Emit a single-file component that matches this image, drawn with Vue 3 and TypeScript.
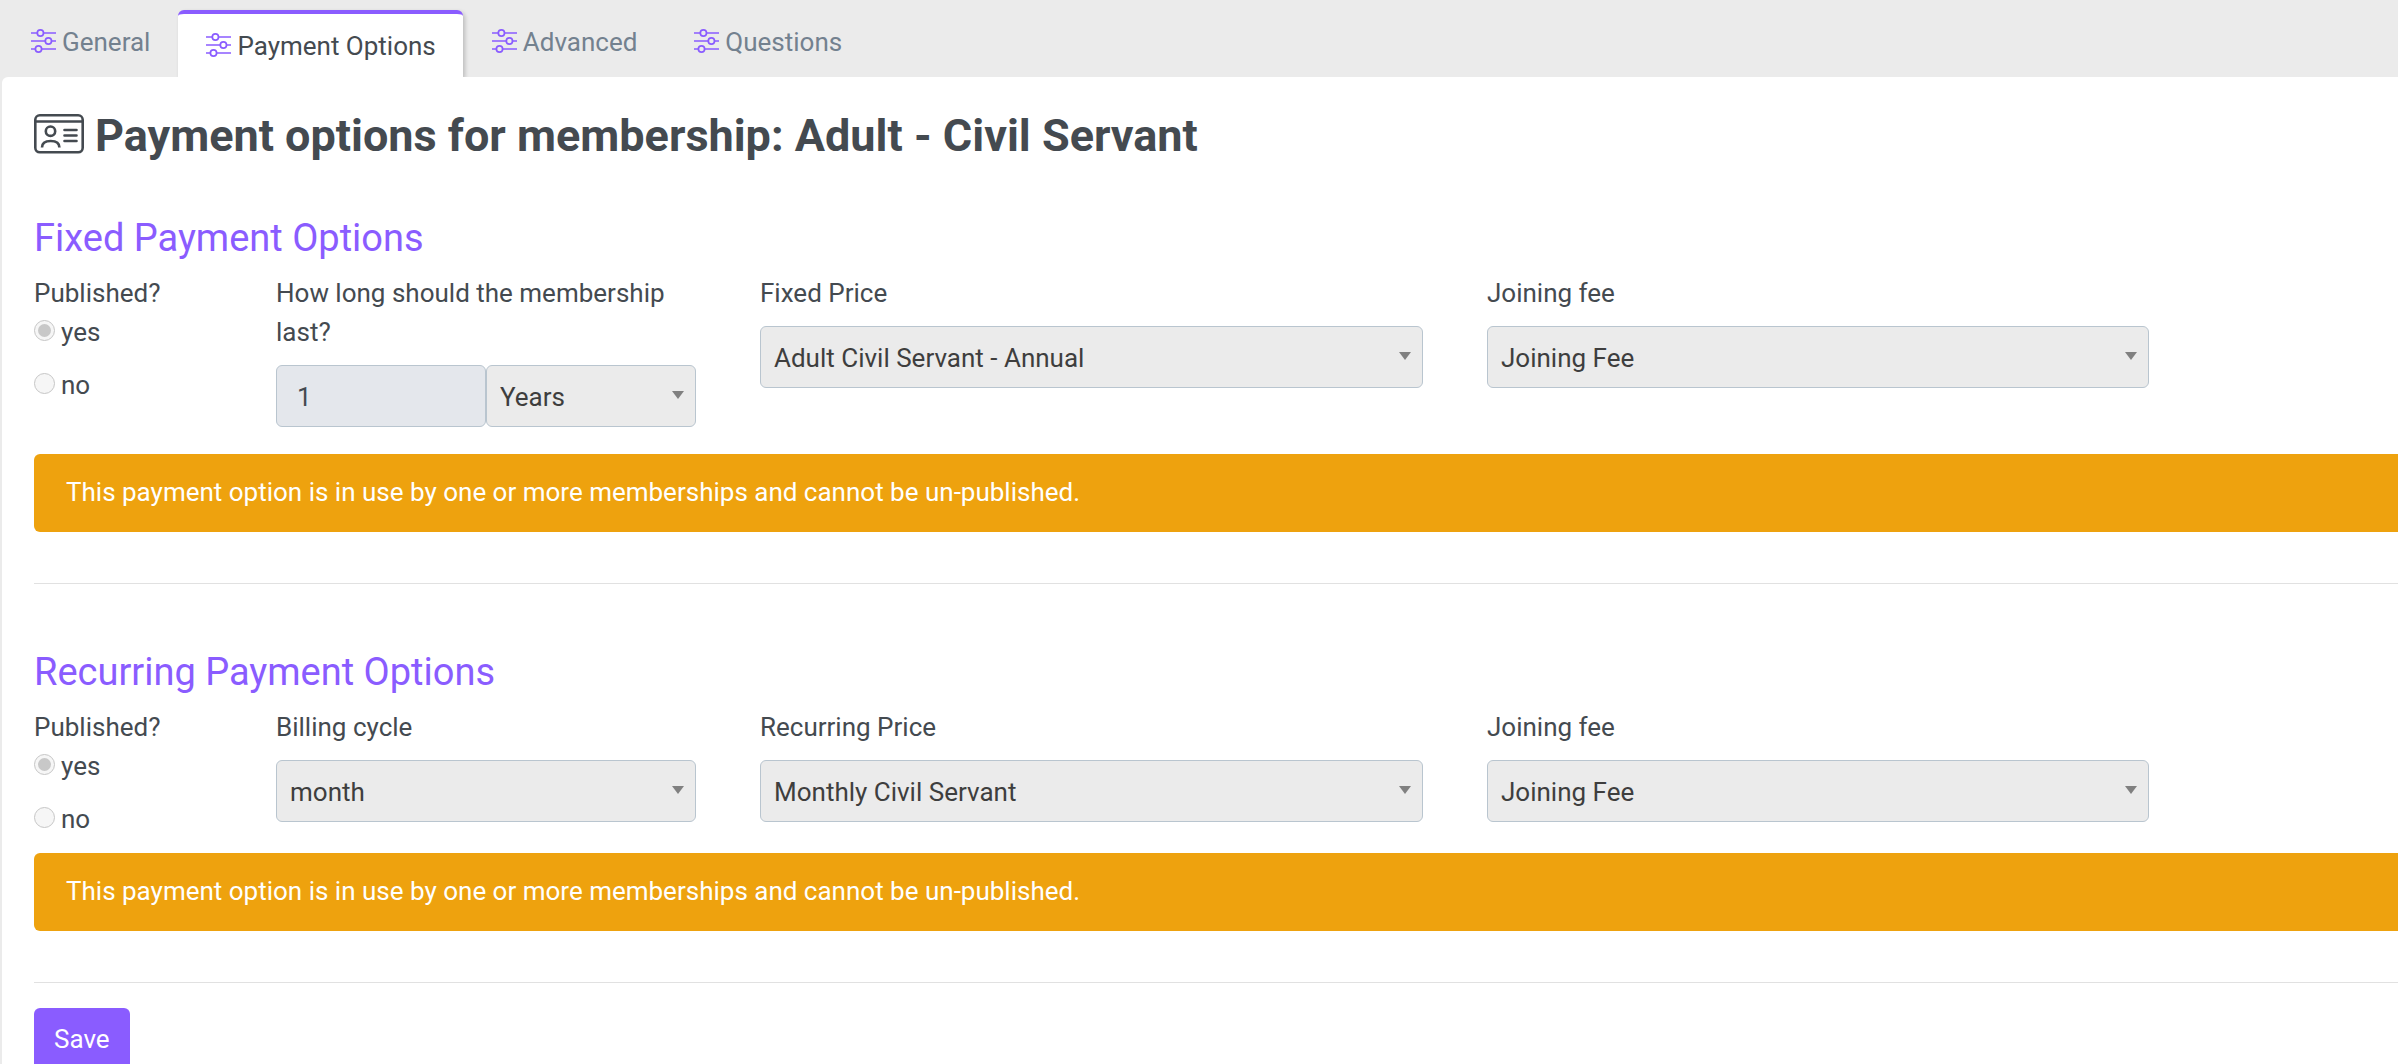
<script setup lang="ts">
import { ref } from 'vue'

interface Field {
  label: string
  value: string
}

interface Section {
  id: string
  title: string
  period: Field & { amount?: string }
  price: Field
  fee: Field
}

const tabs: string[] = ['General', 'Payment Options', 'Advanced', 'Questions']
const activeTab = ref<string>('Payment Options')

const warning = 'This payment option is in use by one or more memberships and cannot be un-published.'

const sections: Section[] = [
  {
    id: 'fixed',
    title: 'Fixed Payment Options',
    period: { label: 'How long should the membership last?', value: 'Years', amount: '1' },
    price: { label: 'Fixed Price', value: 'Adult Civil Servant - Annual' },
    fee: { label: 'Joining fee', value: 'Joining Fee' },
  },
  {
    id: 'recurring',
    title: 'Recurring Payment Options',
    period: { label: 'Billing cycle', value: 'month' },
    price: { label: 'Recurring Price', value: 'Monthly Civil Servant' },
    fee: { label: 'Joining fee', value: 'Joining Fee' },
  },
]
</script>

<template>
  <div class="page">
    <nav class="tabs">
      <a
        v-for="tab in tabs"
        :key="tab"
        href="#"
        class="tab"
        :class="{ active: tab === activeTab }"
        @click.prevent="activeTab = tab"
      >
        <svg class="tab-icon" viewBox="0 0 25 26" aria-hidden="true">
          <path d="M0 5h6M12.700 5h12.300M0 13h14M20.700 13h4.300M0 21h4.300M10.700 21h14.300" />
          <circle cx="9.4" cy="5" r="3.1" />
          <circle cx="17.4" cy="13" r="3.1" />
          <circle cx="7.5" cy="21" r="3.1" />
        </svg>
        <span>{{ tab }}</span>
      </a>
    </nav>

    <main class="panel">
      <h1 class="title">
        <svg class="title-icon" viewBox="0 0 50 40" aria-hidden="true">
          <rect x="1.3" y="1.3" width="47.4" height="37" rx="4.5" />
          <path d="M1.300 7.500h47.400" />
          <circle cx="16.5" cy="17.2" r="4.7" />
          <path d="M8 33.500c0-4.500 3.500-6.500 8.700-6.500s8.700 2 8.700 6.500" />
          <path d="M30.500 16h12M30.500 21.500h12M30.500 27h12" stroke-linecap="round" />
        </svg>
        <span>Payment options for membership: Adult - Civil Servant</span>
      </h1>

      <form @submit.prevent>
        <section v-for="s in sections" :key="s.id" class="section">
          <h2>{{ s.title }}</h2>
          <div class="row">
            <fieldset class="published">
              <legend>Published?</legend>
              <label class="choice">
                <input type="radio" :name="s.id + '-published'" value="yes" checked disabled />
                <span>yes</span>
              </label>
              <label class="choice">
                <input type="radio" :name="s.id + '-published'" value="no" disabled />
                <span>no</span>
              </label>
            </fieldset>

            <div class="field">
              <label :for="s.id + '-period'">{{ s.period.label }}</label>
              <div class="group">
                <input
                  v-if="s.period.amount"
                  class="control amount"
                  type="text"
                  :value="s.period.amount"
                  :aria-label="s.period.label"
                  disabled
                />
                <div class="select">
                  <select :id="s.id + '-period'" class="control" disabled>
                    <option>{{ s.period.value }}</option>
                  </select>
                  <svg class="arrow" viewBox="0 0 12 8" aria-hidden="true"><path d="M0 0h12L6 8z" /></svg>
                </div>
              </div>
            </div>

            <div v-for="(f, key) in { price: s.price, fee: s.fee }" :key="key" class="field">
              <label :for="s.id + '-' + key">{{ f.label }}</label>
              <div class="select">
                <select :id="s.id + '-' + key" class="control" disabled>
                  <option>{{ f.value }}</option>
                </select>
                <svg class="arrow" viewBox="0 0 12 8" aria-hidden="true"><path d="M0 0h12L6 8z" /></svg>
              </div>
            </div>
          </div>
          <p class="alert" role="alert">{{ warning }}</p>
          <hr />
        </section>
        <button type="submit" class="save">Save</button>
      </form>
    </main>
  </div>
</template>

<style>
body {
  margin: 0;
  background: #ebebeb;
}
html {
  scrollbar-width: none;
}
</style>

<style scoped>
.page {
  overflow: hidden;
  font: 26px/39px Roboto, "Liberation Sans", sans-serif;
  color: #444a50;
  background: #ebebeb;
}
.page *,
.page *::before {
  box-sizing: border-box;
}
.tabs {
  display: flex;
  align-items: flex-end;
  height: 77px;
  padding-left: 2px;
}
.tab {
  display: flex;
  gap: 6px;
  height: 67px;
  padding: 13px 28px 0 29px;
  color: #73818f;
  text-decoration: none;
}
.tab.active {
  padding: 13px 27px 0 28px;
  color: #444a50;
  background: #fff;
  border-top: 4px solid #8a5cff;
  border-radius: 6px 6px 0 0;
  box-shadow: 2px 2px 4px rgba(0, 0, 0, 0.2);
}
.tab-icon {
  width: 25px;
  height: 26px;
  margin-top: 5px;
  fill: none;
  stroke: #8a5cff;
  stroke-width: 1.7;
}
.panel {
  position: relative;
  margin-left: 2px;
  padding: 32px 0 26px 32px;
  background: #fff;
  border-top-left-radius: 6px;
}
.title {
  display: flex;
  align-items: flex-start;
  gap: 11px;
  margin: 0 0 52px;
  font-size: 45px;
  line-height: 54px;
  font-weight: 700;
}
.title-icon {
  width: 50px;
  height: 40px;
  margin-top: 5px;
  flex: none;
  fill: none;
  stroke: currentColor;
  stroke-width: 2.6;
}
h2 {
  margin: 0 0 12px;
  font-size: 38px;
  line-height: 47px;
  font-weight: 400;
  color: #8a5cff;
}
.section + .section {
  margin-top: 65px;
}
.row {
  display: grid;
  grid-template-columns: 178fr 420fr 663fr 662fr 185fr;
  column-gap: 64px;
}
.row > * {
  min-width: 0;
}
.published {
  margin: 0;
  padding: 0;
  border: 0;
}
.published legend {
  padding: 0;
}
.choice {
  display: flex;
  align-items: flex-start;
  gap: 6px;
  margin-bottom: 14px;
}
.choice input {
  appearance: none;
  display: grid;
  place-items: center;
  width: 21px;
  height: 21px;
  margin: 7px 0 0;
  border: 1px solid #c6c6c6;
  border-radius: 50%;
  background: #f6f6f6;
}
.choice input:checked::before {
  content: "";
  width: 13px;
  height: 13px;
  border-radius: 50%;
  background: #c8c8c8;
}
.field {
  padding-bottom: 27px;
}
.field label {
  display: block;
  margin-bottom: 13px;
}
.group {
  display: grid;
  grid-auto-flow: column;
  grid-auto-columns: minmax(0, 1fr);
}
.select {
  position: relative;
}
.control {
  display: block;
  appearance: none;
  width: 100%;
  height: 62px;
  margin: 0;
  padding: 2px 32px 0 13px;
  font: inherit;
  color: #3e3e3e;
  opacity: 1;
  background: #ebebeb;
  border: 1px solid #b9c5cf;
  border-radius: 6px;
}
.amount {
  padding: 2px 20px 0;
  color: #444a50;
  background: #e4e7ec;
}
.arrow {
  position: absolute;
  top: 26px;
  right: 12px;
  width: 12px;
  height: 8px;
  fill: #808080;
}
.alert {
  margin: 0 0 51px;
  padding: 19px 32px 20px;
  color: #fff;
  background: #eea20e;
  border-radius: 6px 0 0 6px;
}
hr {
  height: 1px;
  margin: 0;
  border: 0;
  background: #e1e1e1;
}
.save {
  display: block;
  height: 62px;
  margin-top: 25px;
  padding: 0 20px;
  font: inherit;
  color: #fff;
  background: #8a5cff;
  border: 0;
  border-radius: 6px;
}
</style>
